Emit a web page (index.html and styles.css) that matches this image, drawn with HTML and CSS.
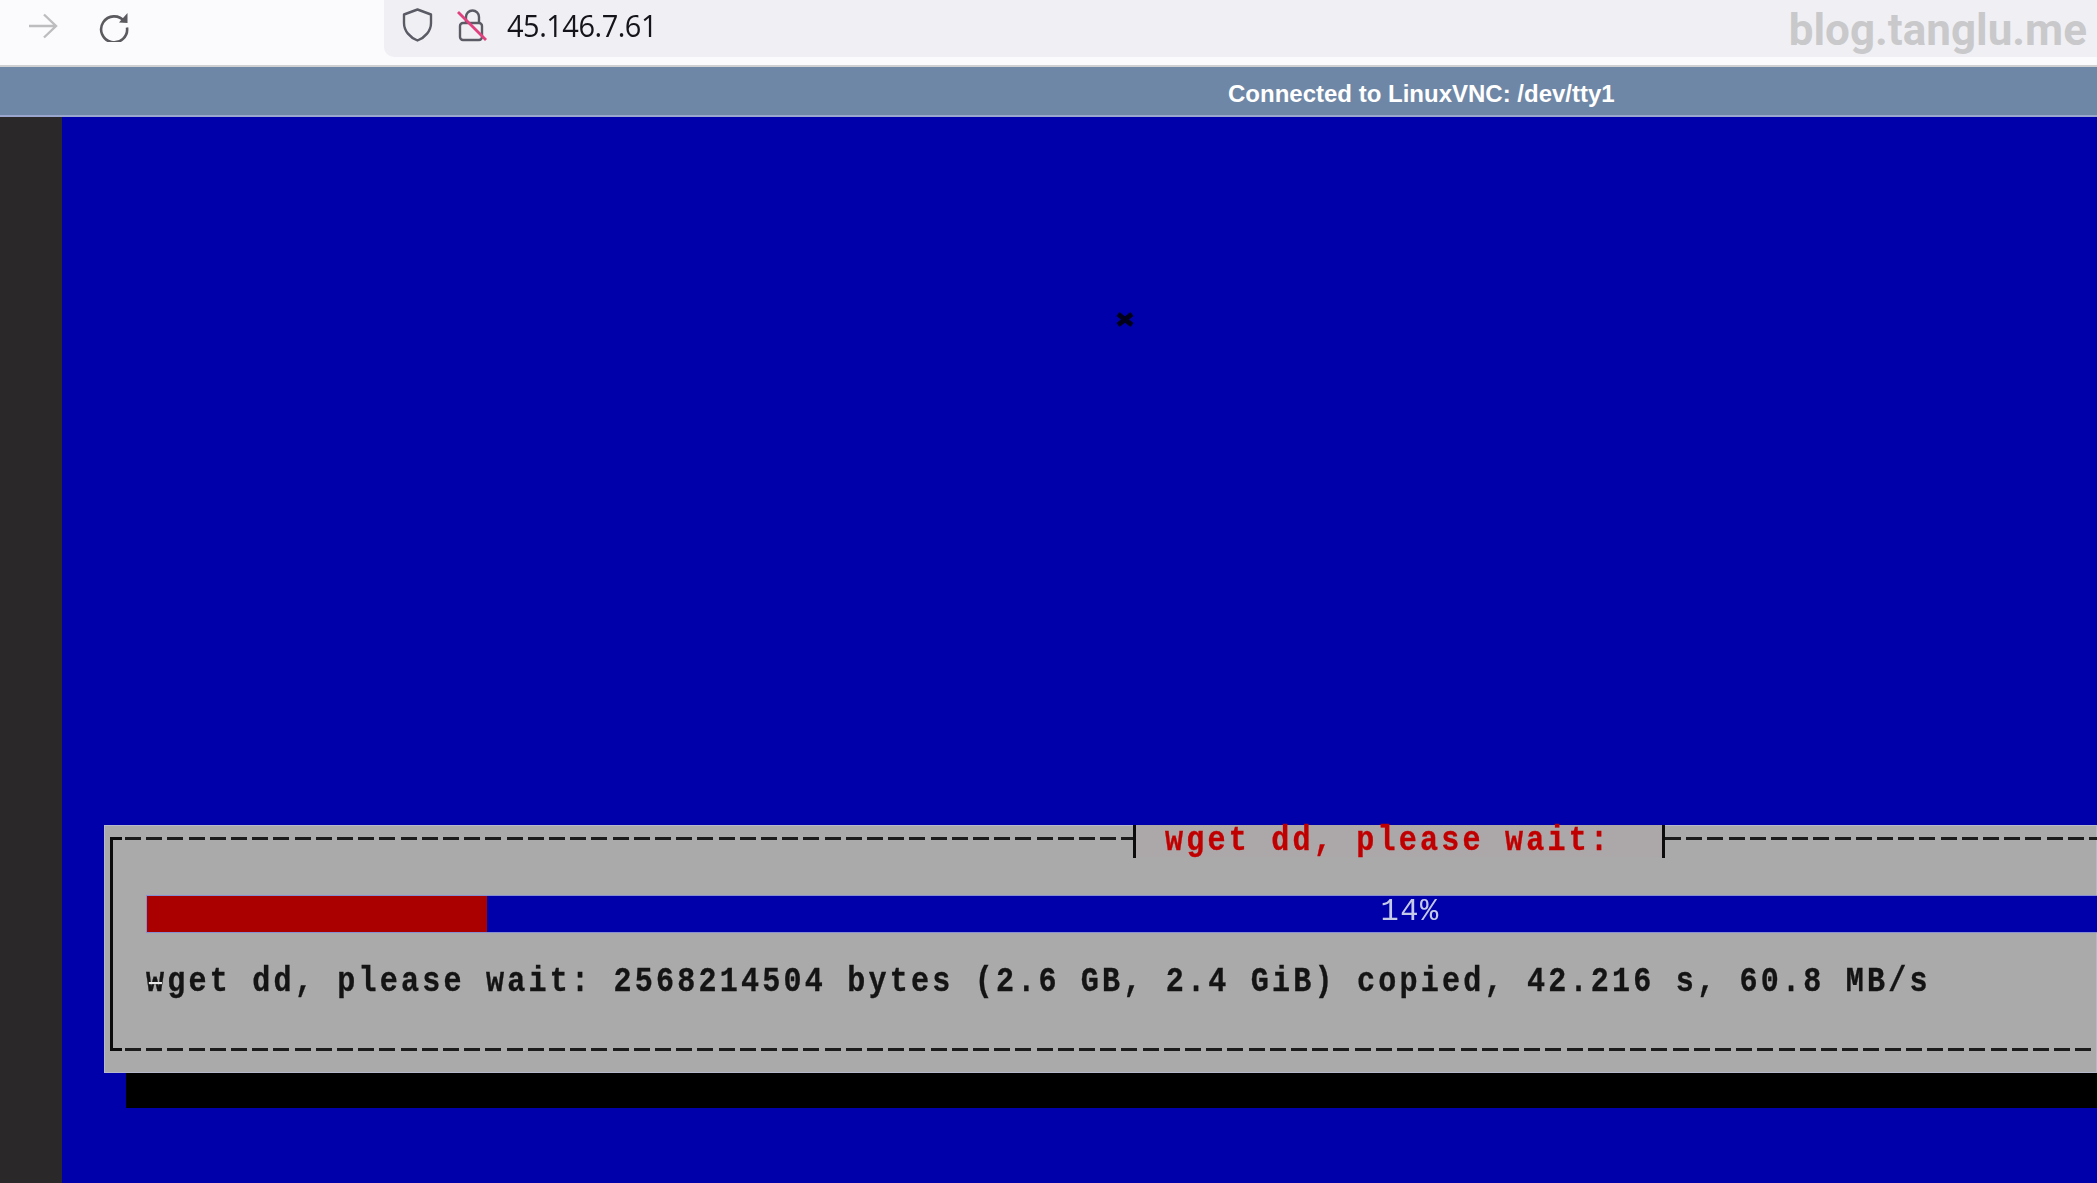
FILE: index.html
```html
<!DOCTYPE html>
<html lang="en">
<head>
<meta charset="utf-8">
<title>45.146.7.61</title>
<link rel="stylesheet" href="styles.css">
</head>
<body>
<div class="page">
  <header class="toolbar">
    <svg class="icon-forward" width="30" height="26" viewBox="0 0 30 26"><path d="M1 13H28M16 1.500L28 13L16 24.500" fill="none" stroke="#bdbdbf" stroke-width="2.400"/></svg>
    <svg class="icon-reload" width="30" height="30" viewBox="0 0 30 30"><path d="M25.500 9.500A13 13 0 1 0 28 15.500" fill="none" stroke="#5b5b5f" stroke-width="2.600"/><path d="M20 10.500L28.500 1V11Z" fill="#5b5b5f"/></svg>
    <div class="urlbar">
      <svg class="icon-shield" width="31" height="34" viewBox="0 0 31 34"><path d="M15.500 1.500L29 6.500V15C29 23 23 29.500 15.500 32.500C8 29.500 2 23 2 15V6.500Z" fill="none" stroke="#5b5b66" stroke-width="2.400" stroke-linejoin="round"/></svg>
      <svg class="icon-lock" width="30" height="34" viewBox="0 0 30 34"><path d="M9 15V9A6.500 6.500 0 0 1 22 9V15" fill="none" stroke="#5b5b66" stroke-width="2.400"/><rect x="3" y="15" width="22" height="17" rx="3" fill="none" stroke="#5b5b66" stroke-width="2.400"/><path d="M1 4L29 32" stroke="#e0407e" stroke-width="2.800"/></svg>
      <span class="address">45.146.7.61</span>
    </div>
    <span class="watermark">blog.tanglu.me</span>
  </header>
  <div class="statusbar"><span class="status-text">Connected to LinuxVNC: /dev/tty1</span></div>
  <main class="workspace">
    <aside class="sidebar"></aside>
    <section class="screen">
      <svg class="pointer" width="20" height="15" viewBox="0 0 20 15"><path d="M3 2L17 13M17 2L3 13" stroke="#00001a" stroke-width="5"/></svg>
      <div class="dialog">
        <div class="frame">
          <div class="title-row">
            <i class="corner"></i>
            <i class="dash dash-left"></i>
            <i class="tick"></i>
            <h1 class="title"><span class="vga">wget dd, please wait:</span></h1>
            <i class="tick"></i>
            <i class="dash dash-right"></i>
          </div>
          <div class="bar">
            <div class="bar-fill"></div>
            <span class="bar-label">14%</span>
          </div>
          <p class="message vga"><span class="cursor-mark">w</span>get dd, please wait: 2568214504 bytes (2.6 GB, 2.4 GiB) copied, 42.216 s, 60.8 MB/s</p>
          <div class="bottom-row">
            <i class="corner"></i>
            <i class="dash"></i>
          </div>
        </div>
      </div>
      <div class="dialog-shadow"></div>
    </section>
  </main>
</div>
</body>
</html>
```
FILE: styles.css
```css
* { box-sizing: border-box; }
html, body { margin: 0; padding: 0; }
body { background: #0000aa; overflow: hidden; }
.page { width: 2097px; height: 1183px; display: flex; flex-direction: column; overflow: hidden; }

.toolbar { position: relative; flex: none; height: 67px; display: flex; align-items: flex-start; background: #fbfbfe; border-bottom: 2px solid #cfd0d2; }
.icon-forward { flex: none; margin: 13px 0 0 28px; }
.icon-reload { flex: none; margin: 12px 0 0 41px; }
.urlbar { flex: 1; height: 57px; margin-left: 255px; display: flex; align-items: flex-start; background: #f0f0f4; border-radius: 0 0 0 10px; }
.icon-shield { flex: none; margin: 8px 0 0 18px; }
.icon-lock { flex: none; margin: 8px 0 0 24px; }
.address { margin: 5px 0 0 20px; font: 400 29px/40px "Open Sans", "Noto Sans", sans-serif; color: #15141a; letter-spacing: -0.5px; transform: scaleY(1.06); }
.watermark { position: absolute; right: 10px; top: 5px; font: 700 44px/50px "Roboto", sans-serif; color: #c9c9cb; }

.statusbar { flex: none; height: 50px; display: flex; align-items: center; padding: 6px 0 0 1228px; background: #6f87a6; border-bottom: 2px solid #9ba6cf; }
.status-text { font: 700 24px/30px "Liberation Sans", sans-serif; color: #fff; white-space: nowrap; }

.workspace { flex: 1; display: flex; min-height: 0; }
.sidebar { flex: none; width: 62px; background: #2a2829; }
.screen { position: relative; flex: 1; min-width: 0; background: #0000aa; padding: 708px 0 0 42px; overflow: hidden; }
.pointer { position: absolute; left: 1053px; top: 195px; filter: blur(0.7px); }

.dialog { height: 248px; padding: 12px 0 0 6px; background: #aaaaaa; box-shadow: inset 0 0 0 1px rgba(190, 195, 225, 0.6); font-family: "Liberation Mono", "DejaVu Sans Mono", monospace; }
.dialog-shadow { height: 35px; margin-left: 22px; background: #000; }
.frame { height: 214px; display: flex; flex-direction: column; border-left: 3px solid #0c0c0c; }

.title-row { flex: none; height: 33px; margin-top: -12px; display: flex; align-items: flex-start; }
.corner { flex: none; width: 9px; height: 3px; margin: 12px 3px 0 0; background: #0c0c0c; }
.dash { display: block; flex: 1; height: 3px; margin-top: 12px; background: repeating-linear-gradient(90deg, #1c1c1c 0 16px, transparent 16px 21.2px); filter: blur(0.4px); }
.dash-left { flex: none; width: 1008px; }
.tick { flex: none; width: 3px; height: 33px; background: #0c0c0c; }
.title { flex: none; width: 526px; margin: 0; padding: 0 0 0 29px; font: 700 32px/32px "Liberation Mono", monospace; color: #c00000; white-space: nowrap; background: #aca8aa; }
.vga { display: block; letter-spacing: 3.400px; transform: scale(0.94, 1.08); transform-origin: left center; filter: blur(0.4px); -webkit-text-stroke: 0.3px currentColor; }

.bar { flex: none; height: 36px; width: 3000px; margin: 38px 0 0 34px; display: flex; background: #0000aa; box-shadow: 0 0 0 1px rgba(120, 130, 225, 0.7); }
.bar-fill { flex: none; width: 340px; background: #aa0000; }
.bar-label { margin-left: 892px; font: 400 32px/32px "Liberation Mono", monospace; letter-spacing: 1.600px; color: #c4c9e8; filter: blur(0.4px); transform: scaleX(0.95); }

.message { flex: none; height: 36px; margin: 32px 0 0 33px; font: 700 32px/36px "Liberation Mono", monospace; color: #141414; white-space: nowrap; }
.cursor-mark { position: relative; }
.cursor-mark::after { content: ""; position: absolute; left: 3px; top: 19px; width: 14px; height: 2px; background: #e8e8e8; }

.bottom-row { flex: none; margin-top: auto; display: flex; height: 3px; }
.bottom-row .corner, .bottom-row .dash { margin-top: 0; }
```
